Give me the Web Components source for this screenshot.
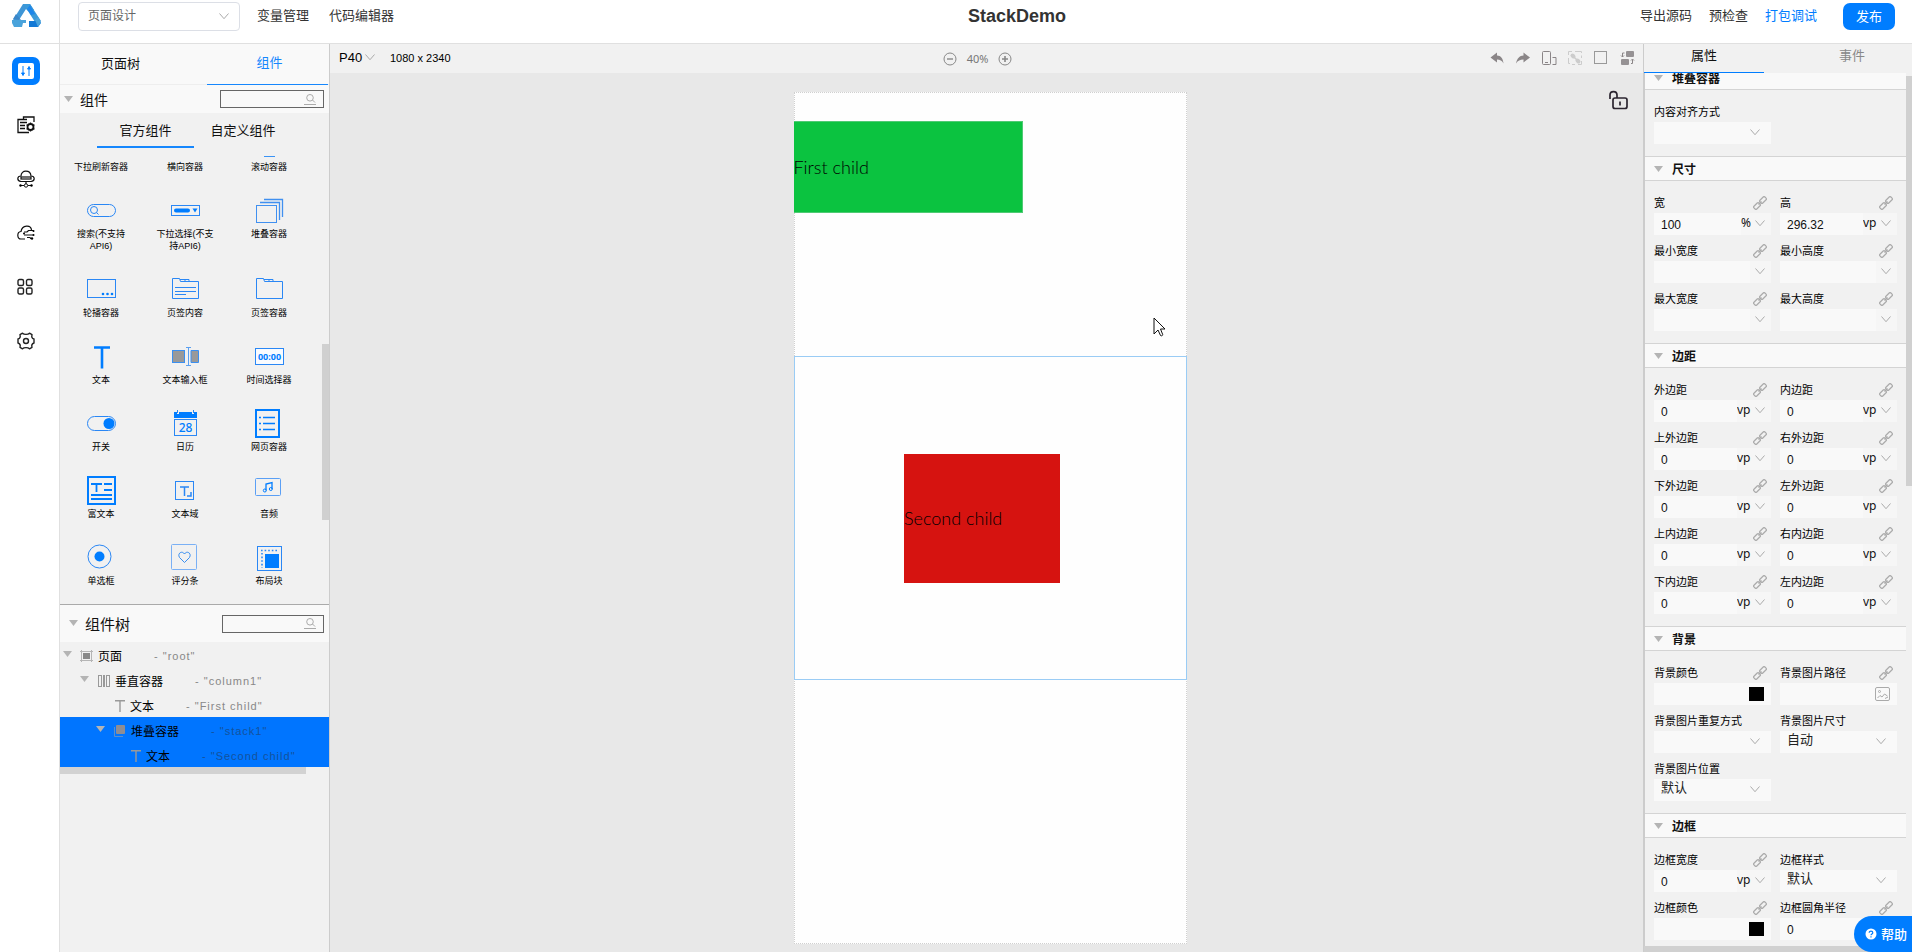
<!DOCTYPE html>
<html lang="zh-CN">
<head>
<meta charset="utf-8">
<title>StackDemo</title>
<style>
html,body{margin:0;height:100%}
body{font-family:"Liberation Sans","Noto Sans CJK SC",sans-serif;font-size:13px;color:#111;background:#fff;overflow:hidden}
</style>
</head>
<body>
<ide-app></ide-app>
<script>
const define=(name,render)=>customElements.define(name,class extends HTMLElement{
  connectedCallback(){
    if(this.shadowRoot)return;
    const t=document.createElement('template');
    t.innerHTML='<style>*{box-sizing:border-box}button,input,select{font:inherit;color:inherit;border:0;margin:0;padding:0;background:none;outline:0;border-radius:0}select{appearance:none;-webkit-appearance:none}a{color:inherit;text-decoration:none}</style>'+render(this);
    this.attachShadow({mode:'open'}).append(t.content.cloneNode(true));
  }
});

/* name: [width, height, drawing] */
const ICONS={
logo:[30,24,'<path d="M11 0h7l4 6-6 1-2-2-7 11H1z" fill="#3f96d6"/><path d="M0 16h14v3h-3l-1 4H2l-2-4z" fill="#4aa3db"/><path d="M1 15l3-5 5 6z" fill="#3a86c8"/><path d="M11 0h7l11 17-6 1L14 4z" fill="#3b9ad9"/><path d="M15 5l3-4 5 9-4 1z" fill="#1d86ea"/><path d="M17 17h11l1 2-3 4h-9z" fill="#1379d6"/><path d="M23 16l3-3 3 5-3 5z" fill="#4aa3db"/>'],
tile:[16,16,'<rect width="16" height="16" rx="2" fill="#fff"/><g stroke="#007dff" fill="none"><path d="M5 3v10M11 3v10"/><path d="M3.500 10L5 12l1.500-2zM9.500 6L11 4l1.500 2z" fill="#007dff"/></g>'],
page:[18,18,'<g fill="none" stroke="#111" stroke-width="1.300"><path d="M12 16.500H1V3.500h9M6.500 3V1h10.500v5M3 6.500h7M3 9.500h5M3 12.500h5"/><circle cx="13.500" cy="11" r="3" stroke-width="1.800"/><path d="M13.500 6.500v2M13.500 13.500v2M9.500 8.800l1.700 1M15.800 12.200l1.700 1M9.500 13.200l1.700-1M15.800 9.800l1.700-1"/></g>'],
cloud1:[18,18,'<g fill="none" stroke="#111" stroke-width="1.200"><path d="M4 11.500C-.5 11 0 6 4 6c0-6.500 9.500-6.500 10 0 4 0 4.500 5 0 5.500z"/><rect x="4" y="7" width="10" height="2"/><path d="M9 12v2.500M4 15.500h3.500M10.500 15.500H14"/></g><circle cx="9" cy="15.500" r="1.700" fill="#fff" stroke="#111"/><circle cx="3.500" cy="15.500" r="1.200"/><circle cx="14.500" cy="15.500" r="1.200"/>'],
cloud2:[18,18,'<g fill="none" stroke="#111" stroke-width="1.200"><path d="M8 15H4C0 15-.5 8 4 7.500 5 .5 14 .5 14.500 6"/><path d="M7 8h3l1.500-1.500H16M7 11h9M10 13.500h3l1 1.500"/></g><circle cx="16.500" cy="7" r="1"/><circle cx="16.500" cy="11" r="1"/><circle cx="15" cy="14.500" r="1.200"/><circle cx="7" cy="9.500" r="1"/>'],
apps:[18,18,'<g fill="none" stroke="#222" stroke-width="1.400"><rect x="1" y="1.500" width="5.500" height="6" rx="1.500"/><rect x="9.500" y="1.500" width="5.500" height="6" rx="1.500"/><rect x="1" y="10" width="5.500" height="6" rx="1.500"/><rect x="9.500" y="10" width="5.500" height="6" rx="1.500"/></g>'],
gear:[18,18,'<g fill="none" stroke="#222" stroke-width="1.400" stroke-linejoin="round"><path d="M5.500 1.200C7 2.800 11 2.800 12.500 1.200L15 2.700C14.300 5 15.500 6.500 17 7v4c-1.500.5-2.700 2-2 4.300l-2.500 1.500c-1.500-1.600-5.500-1.600-7 0L3 15.300C3.700 13 2.500 11.500 1 11V7c1.500-.5 2.700-2 2-4.300z"/><circle cx="9" cy="9" r="2.500"/></g>'],
chev:[10,7,'<path d="M.5.5L5 5.700 9.500.5" fill="none" stroke="#aaa"/>'],
tri:[9,6,'<path d="M0 0h9L4.500 6z" fill="#b4b4b4"/>'],
search:[12,11,'<g fill="none" stroke="#aaa"><circle cx="6" cy="3.800" r="3.300"/><path d="M8.500 6L11 8.500M0 10.500h12"/></g>'],
link:[14,14,'<g fill="none" stroke="#aaa" stroke-width="1.200"><rect x="-3.500" y="-2" width="7" height="4" rx="1.200" transform="translate(4 10) rotate(-45)"/><rect x="-3.500" y="-2" width="7" height="4" rx="1.200" transform="translate(10 4) rotate(-45)"/><path d="M5.500 8.500l3-3"/></g>'],
image:[15,14,'<g fill="none" stroke="#aaa"><rect x=".5" y=".5" width="14" height="13" rx="1.500"/><circle cx="4.500" cy="4.500" r="1"/><path d="M2.500 11l2.500-2.500 2 1.500 2.500-3 3 2M10 11.500l3-1.500"/></g>'],
minus:[14,14,'<circle cx="7" cy="7" r="6" fill="none" stroke="#888"/><path d="M4 7h6" stroke="#888" stroke-width="1.400"/>'],
plus:[14,14,'<circle cx="7" cy="7" r="6" fill="none" stroke="#888"/><path d="M4 7h6M7 4v6" stroke="#888" stroke-width="1.600"/>'],
undo:[16,16,'<path d="M1.500 7.500L8 2.500v3c4 0 6 3 6.500 8C13 10.500 11 9.500 8 9.500v3z" fill="#8a8587"/>'],
redo:[16,16,'<path d="M15 7.500L8.500 2.500v3C4.500 5.500 2 8.500 1 13.500c2-3 4-4 7.500-4v3z" fill="#8a8587"/>'],
phone:[16,16,'<g fill="none" stroke="#8a8587"><rect x="1.500" y="1.500" width="8" height="13" rx="1"/><path d="M4 12.500h3M11.500 7.500h3.500v7h-3.500"/></g>'],
group:[16,16,'<g fill="none" stroke="#ccc"><path d="M1.500 5V1.500H5M8 1.500h6.500V3M1.500 8v5.500H3M14.500 11v3.500H11M8 14.500H5M14.500 8V5.500"/></g><g stroke="#ccc" stroke-width="4" stroke-linecap="round"><path d="M5.500 5.500l1 1M10.500 10.500l1 1"/></g><path d="M7 7l3 3" stroke="#ccc" stroke-width="1.500"/>'],
square:[16,16,'<rect x="1.500" y="1.500" width="12" height="12" fill="none" stroke="#999"/>'],
swap:[16,16,'<g fill="#969294"><rect x="7" y="1" width="8" height="6" rx="1"/><rect x="2" y="9" width="8" height="6" rx="1"/></g><path d="M5.500 3H3.500v4M2 5.500L3.500 7 5 5.500M12 13.500h1.500v-4M12 10.500L13.500 9l1.500 1.500" fill="none" stroke="#8a8587"/>'],
lock:[20,20,'<g fill="none" stroke="#2b2530" stroke-width="1.700"><rect x="5" y="8" width="14" height="10.500" rx="2"/><path d="M2 9V5c0-4.500 7-4.500 7 0v3M12 11.500v4"/></g>'],
cursor:[13,20,'<path d="M1 1v16l4-4 2.500 5.500c1 .8 2.500 0 2.200-1L7.500 12H12z" fill="#fff" stroke="#111"/>'],
help:[12,12,'<circle cx="6" cy="6" r="5.500" fill="#fff"/><path d="M4.200 4.800c0-2.400 3.600-2.200 3.600-.1C7.800 6 6 5.900 6 7.300M6 8.300v1.300" stroke="#007dff" stroke-width="1.200" fill="none"/>'],
tRoot:[13,12,'<path d="M1.500 0v12M11.500 0v12M0 1.500h13M0 10.500h13" stroke="#b5b5b5" fill="none"/><rect x="3" y="3" width="7" height="6" fill="#888"/>'],
tCol:[13,12,'<g fill="none" stroke="#999"><rect x="1.500" y=".5" width="3" height="11"/><rect x="9.500" y=".5" width="3" height="11"/></g><rect x="6" y="0" width="2" height="12" fill="#999"/>'],
tText:[10,12,'<path d="M0 .7h10M5 0v12" stroke="#999" stroke-width="1.400"/>'],
tStack:[13,12,'<path d="M1.500 2v9.500H10" fill="none" stroke="#5d8fca"/><rect x="3" y="0" width="9" height="9" rx="1" fill="#8f8d92"/>'],
none:[30,30,''],
pScroll:[30,30,'<path d="M10 28.500h11" stroke="#3a93f5"/>'],
pSearch:[30,30,'<g fill="none" stroke="#2a87f5"><rect x="1.500" y="9.500" width="28" height="12" rx="6"/><circle cx="8" cy="15" r="3.500"/><path d="M10.500 17.500l2 2"/></g>'],
pSelect:[30,30,'<rect x="1.500" y="10.500" width="28" height="10" fill="none" stroke="#2a87f5"/><path d="M6 15.500h12" stroke="#007dff" stroke-width="4" stroke-linecap="round"/><path d="M22.500 13.500h5l-2.500 4z" fill="#007dff"/>'],
pStack:[30,30,'<g fill="none" stroke="#4090f0"><rect x="2.500" y="10.500" width="20" height="17"/><path d="M6 7.500h19.500V25M10 4.500h18.500V22" stroke-width="1.300"/></g>'],
pSwiper:[30,30,'<rect x="1.500" y="5.500" width="28" height="18" fill="none" stroke="#2a87f5"/><g fill="#007dff"><circle cx="17" cy="20" r="1.300"/><circle cx="21.500" cy="20" r="1.300"/><circle cx="26" cy="20" r="1.300"/></g>'],
pTabC:[30,30,'<g fill="none" stroke="#2a87f5"><path d="M2.500 24.500V4.500h7l1 3h18v17zM10 5.500h9v2M15 5.500v2"/><path d="M5 13.500h21M5 17.500h21M5 20.500h11"/></g>'],
pTabs:[30,30,'<path d="M2.500 24.500V4.500h7l1 3h18v17zM10 5.500h9v2M15 5.500v2" fill="none" stroke="#2a87f5"/>'],
pText:[30,30,'<path d="M8 6.500h16M16 5.500v22" stroke="#007dff" stroke-width="2.600"/>'],
pInput:[30,30,'<g fill="#999" stroke="#3a8ff0"><rect x="2.500" y="9.500" width="12" height="12"/><path d="M21 9.500h7.500v12H21z"/></g><path d="M16 6.500h5M16 24.500h5M18.500 6.500v18" stroke="#5a9ff0" fill="none"/>'],
pTime:[30,30,'<rect x="1.500" y="7.500" width="28" height="16" fill="#f9fbff" stroke="#2a87f5"/><text x="15.500" y="19" text-anchor="middle" font-family="Noto Sans,sans-serif" font-weight="700" font-size="9" fill="#007dff">00:00</text>'],
pSwitch:[30,30,'<rect x="1.500" y="8.500" width="28" height="14" rx="7" fill="none" stroke="#2a87f5"/><circle cx="23" cy="15.500" r="5.500" fill="#007dff"/>'],
pCal:[30,30,'<path d="M4 4h3v2h2V4h13v2h2V4h3v6H4z" fill="#007dff"/><path d="M7.500 2v3M23.500 2v3" stroke="#2a87f5"/><rect x="4.500" y="11.500" width="22" height="16" fill="none" stroke="#2a87f5"/><text x="15.500" y="24" text-anchor="middle" font-family="Noto Sans,sans-serif" font-weight="500" font-size="12" fill="#007dff">28</text>'],
pWeb:[30,30,'<rect x="2" y="2" width="23" height="27" fill="none" stroke="#007dff" stroke-width="2"/><path d="M9 9.500h12M9 15.500h12M9 21.500h12M5 9.500h2M5 15.500h2M5 21.500h2" stroke="#007dff" stroke-width="1.600"/>'],
pRich:[30,30,'<rect x="2" y="2" width="27" height="27" fill="none" stroke="#007dff" stroke-width="2"/><path d="M5 9h11M10.500 9v8M18 9h8M18 15h8M5 20h21M5 24h21" stroke="#007dff" stroke-width="1.800"/>'],
pArea:[30,30,'<rect x="5.500" y="6.500" width="18" height="18" fill="none" stroke="#2a87f5"/><path d="M10 12h9M14.500 12v9M17 21h4v-4" fill="none" stroke="#2a87f5" stroke-width="1.500"/>'],
pAudio:[30,30,'<rect x="1.500" y="3.500" width="25" height="17" rx="1" fill="none" stroke="#5a9ff5"/><path d="M12 15.500V9l6-1.500v6.500" fill="none" stroke="#007dff" stroke-width="1.300"/><circle cx="10.800" cy="15.500" r="1.500" fill="none" stroke="#007dff"/><circle cx="16.800" cy="14" r="1.500" fill="none" stroke="#007dff"/>'],
pRadio:[30,30,'<circle cx="13.500" cy="14.500" r="11.500" fill="none" stroke="#2a87f5"/><circle cx="13.500" cy="14.500" r="5" fill="#007dff"/>'],
pRate:[30,30,'<rect x="1.500" y="2.500" width="25" height="25" rx="1" fill="none" stroke="#7ab0f5"/><path d="M14.500 20.500l-5-5c-2.500-4 2.500-7.500 5-3.500 2.500-4 7.500-.5 5 3.500z" fill="none" stroke="#3a8ff0"/>'],
pBlock:[30,30,'<rect x="3.500" y="4.500" width="24" height="24" fill="none" stroke="#2a87f5"/><rect x="11" y="12" width="14" height="14" fill="#007dff"/><path d="M7 8.500h16M8 11v15" stroke="#2a87f5" stroke-width="1.600" stroke-dasharray="1.600 2"/>']
};
define('ui-icon',e=>{const [w,h,d]=ICONS[e.getAttribute('name')];
  return `<style>:host{display:inline-flex;flex:none;width:${w}px;height:${h}px;pointer-events:none}svg{display:block}</style><svg width="${w}" height="${h}" viewBox="0 0 ${w} ${h}" aria-hidden="true">${d}</svg>`});

define('ide-app',()=>`<style>
:host{display:grid;height:100vh;grid-template:44px minmax(0,1fr) / 60px 270px minmax(0,1fr) 269px}
ide-rail{grid-row:1/3}ide-header{grid-column:2/5}
.left{display:flex;flex-direction:column;min-height:0;border-right:1px solid #ccc;background:#f1f1f1}
component-palette{flex:1;min-height:0}component-tree{min-height:347px}
help-button{position:fixed;right:0;bottom:0}
</style>
<ide-rail></ide-rail><ide-header></ide-header>
<aside class="left"><component-palette></component-palette><component-tree></component-tree></aside>
<design-canvas></design-canvas><prop-panel></prop-panel><help-button></help-button>`);

define('ide-rail',()=>`<style>
:host{display:flex;flex-direction:column;border-right:1px solid #e0e0e0}
.logo{height:44px;border-bottom:1px solid #e0e0e0;padding:4px 0 0 12px;flex:none}
nav{display:flex;flex-direction:column;gap:26px;padding:13px 0 0 12px}
button{width:28px;height:28px;border-radius:7px;display:flex;align-items:center;justify-content:center;cursor:pointer}
.on{background:#007dff}
</style><div class="logo"><ui-icon name="logo"></ui-icon></div>
<nav><button class="on" aria-label="设计"><ui-icon name="tile"></ui-icon></button>
${['page','cloud1','cloud2','apps','gear'].map(n=>`<button aria-label="${n}"><ui-icon name="${n}"></ui-icon></button>`).join('')}</nav>`);

define('ide-header',()=>`<style>
:host{display:flex;align-items:center;justify-content:space-between;padding:0 17px 11px 18px;border-bottom:1px solid #e0e0e0;color:#333}
div{display:flex;align-items:center}
.l{gap:20px}.r{gap:17px}
a{padding-bottom:3px}
.sel{position:relative;width:162px;height:29px;margin-right:-3px}
.sel select{width:100%;height:100%;border:1px solid #dcdfe6;border-radius:4px;padding:0 9px;font-size:12px;color:#666}
.sel ui-icon{position:absolute;right:11px;top:11px}
h1{margin:0;font-size:18px;line-height:24px}
.blue{color:#007dff}
button{width:52px;height:27px;border-radius:7px;background:#007dff;color:#fff;margin-left:9px;padding-bottom:2px}
</style><div class="l"><div class="sel"><select aria-label="视图"><option>页面设计</option></select><ui-icon name="chev"></ui-icon></div>
<a href="#">变量管理</a><a href="#">代码编辑器</a></div><h1>StackDemo</h1>
<div class="r"><a href="#">导出源码</a><a href="#">预检查</a><a href="#" class="blue">打包调试</a><button>发布</button></div>`);

define('search-box',()=>`<style>
:host{display:block;position:relative;width:104px;height:18px}
input{width:100%;height:100%;border:1px solid #666;padding:0 24px 0 4px;font-size:11px}
ui-icon{position:absolute;right:8px;top:4px}
</style><input type="text" aria-label="搜索"><ui-icon name="search"></ui-icon>`);

const PAL=[['none','下拉刷新容器'],['none','横向容器'],['pScroll','滚动容器'],
['pSearch','搜索(不支持<br>API6)'],['pSelect','下拉选择(不支<br>持API6)'],['pStack','堆叠容器'],
['pSwiper','轮播容器'],['pTabC','页签内容'],['pTabs','页签容器'],
['pText','文本'],['pInput','文本输入框'],['pTime','时间选择器'],
['pSwitch','开关'],['pCal','日历'],['pWeb','网页容器'],
['pRich','富文本'],['pArea','文本域'],['pAudio','音频'],
['pRadio','单选框'],['pRate','评分条'],['pBlock','布局块']];
define('component-palette',()=>`<style>
:host{display:flex;flex-direction:column}
.tabs{display:grid;grid-template-columns:1fr 121px;height:41px;flex:none;background:#f9f9f9;border-bottom:1px solid #eee;padding-right:1px}
.tabs button{padding-bottom:5px;padding-right:26px;height:41px}.tabs button+button{padding-right:0;padding-left:4px;color:#1687fd;border-bottom:1px solid #1687fd}
header{display:flex;align-items:center;height:28px;flex:none;background:#f9f9f9;padding:0 5px 0 4px;font-size:14px}
header span{flex:1;padding-left:7px}
.sub{display:flex;padding-left:37px;height:35px;flex:none;align-items:end;gap:6px}
.sub button{height:32px;width:97px;padding-bottom:4px}.sub .on{border-bottom:2px solid #1687fd}
.sub button+button{width:86px;padding-bottom:6px}
.body{flex:1;min-height:0;overflow:hidden;position:relative;display:flex;flex-direction:column;justify-content:flex-end;border-bottom:1px solid #aaa}
.grid{display:grid;grid-template-columns:repeat(3,84px);row-gap:22px;padding-bottom:17px;flex:none;margin-left:-1px}
.bar{position:absolute;right:0;top:196px;width:7px;height:176px;background:#d0d0d0}
</style><div class="tabs"><button>页面树</button><button>组件</button></div>
<header><ui-icon name="tri"></ui-icon><span>组件</span><search-box></search-box></header>
<div class="sub"><button class="on">官方组件</button><button>自定义组件</button></div>
<div class="body"><div class="grid">${PAL.map(([i,t])=>`<palette-item icon="${i}">${t}</palette-item>`).join('')}</div><div class="bar"></div></div>`);
define('palette-item',e=>`<style>
:host{display:flex;flex-direction:column;align-items:center;gap:3px;font-size:9px;line-height:12px;text-align:center;color:#000}
</style><ui-icon name="${e.getAttribute('icon')}"></ui-icon><span><slot></slot></span>`);

define('component-tree',()=>`<style>
:host{display:block}
header{display:flex;align-items:center;height:37px;background:#f9f9f9;padding:0 5px 1px 9px;font-size:15px}
header span{flex:1;padding-left:7px}search-box{width:102px}
.bar{width:246px;height:7px;background:#d2d2d2}
</style><header><ui-icon name="tri"></ui-icon><span>组件树</span><search-box></search-box></header>
<tree-row depth="0" icon="tRoot" open note="root">页面</tree-row>
<tree-row depth="1" icon="tCol" open note="column1">垂直容器</tree-row>
<tree-row depth="2" icon="tText" note="First child">文本</tree-row>
<tree-row depth="3" icon="tStack" open note="stack1" selected>堆叠容器</tree-row>
<tree-row depth="4" icon="tText" note="Second child" selected>文本</tree-row><div class="bar"></div>`);
const INDENT=[3,20,55,36,71];
define('tree-row',e=>`<style>
:host{display:flex;align-items:center;height:25px;padding:2px 0 0 ${INDENT[e.getAttribute('depth')]}px;font-size:12px;color:#000;white-space:nowrap}
:host([selected]){background:#0075ff}:host([selected]) small{color:#14529c}
ui-icon[name=tri]{margin-right:8px;margin-bottom:4px}ui-icon.i{margin-right:5px}
small{font-size:11px;letter-spacing:1px;color:#888;margin-left:32px}
</style>${e.hasAttribute('open')?'<ui-icon name="tri"></ui-icon>':''}<ui-icon class="i" name="${e.getAttribute('icon')}"></ui-icon><slot></slot><small>- "${e.getAttribute('note')}"</small>`);

define('design-canvas',()=>`<style>
:host{display:flex;flex-direction:column;background:#e8e8e8;position:relative;min-width:0}
.bar{display:grid;grid-template-columns:1fr auto 1fr;align-items:center;height:29px;flex:none;background:#f1f1f1;padding:0 8px 1px 9px}
.bar div{display:flex;align-items:center}
.dev{gap:15px;font-size:11px;color:#000;padding-bottom:1px}
label{display:flex;align-items:center;font-size:13px}label select{width:26px}
.zoom{font-size:11px;color:#777;gap:10px;padding-right:19px;padding-top:1px;font-family:"Noto Sans",sans-serif}
.tools{justify-content:flex-end;gap:10px}button{display:flex}
.stage{flex:1;display:flex;justify-content:center;align-items:flex-start;padding:19px 0 0 7px}
.phone{width:393px;height:852px;background:#fefefe;border:1px dotted #d0d0d0;font-family:Lato,sans-serif;font-size:18px;font-weight:300;color:#000}
.green{display:flex;align-items:center;width:229px;height:92px;background:#0bc340;margin:28px 0 143px -1px;border:1px solid #4fca74;border-width:1px 1px 1px 0}
.frame{display:flex;align-items:center;justify-content:center;height:324px;margin:0 -1px;border:1px solid #9accf5;padding-right:16px}
.red{display:flex;align-items:center;width:156px;height:129px;background:#d61310}
.lock{position:absolute;right:15px;top:46px}.cur{position:absolute;left:calc(50% + 166px);top:273px}
</style><div class="bar"><div class="dev"><label><select aria-label="设备"><option>P40</option></select><ui-icon name="chev"></ui-icon></label><span>1080 x 2340</span></div>
<div class="zoom"><button aria-label="缩小"><ui-icon name="minus"></ui-icon></button><span>40%</span><button aria-label="放大"><ui-icon name="plus"></ui-icon></button></div>
<div class="tools">${['undo','redo','phone','group','square','swap'].map(n=>`<button aria-label="${n}"><ui-icon name="${n}"></ui-icon></button>`).join('')}</div></div>
<div class="stage"><div class="phone"><div class="green">First child</div><div class="frame"><div class="red">Second child</div></div></div></div>
<button class="lock" aria-label="锁定"><ui-icon name="lock"></ui-icon></button><ui-icon class="cur" name="cursor"></ui-icon>`);

const f=(label,type,value='',unit='',link=true)=>`<prop-field label="${label}" type="${type}" value="${value}" unit="${unit}"${link?' link':''}></prop-field>`;
define('prop-panel',()=>`<style>
:host{display:flex;flex-direction:column;min-height:0;background:#f1f1f1;border-left:1px solid #ccc}
.tabs{display:flex;justify-content:space-between;height:29px;flex:none}
.tabs button{width:120px;padding-bottom:8px;color:#888}.tabs .on{color:#111;border-bottom:1px solid #007dff}
.wrap{flex:1;min-height:0;display:grid;grid-template-columns:minmax(0,1fr) 6px}
.scroll{overflow:hidden;min-height:0;border-left:1px solid #ccc}.in{margin-top:-8px}
.v{height:47%;margin-top:3px;background:#d0d0d0}.h{height:6px;flex:none;background:#d0d0d0}
</style><div class="tabs"><button class="on">属性</button><button>事件</button></div>
<div class="wrap"><div class="scroll"><div class="in">
<prop-section heading="堆叠容器">${f('内容对齐方式','select','','',false)}</prop-section>
<prop-section heading="尺寸">${f('宽','unit','100','%')+f('高','unit','296.32','vp')+['最小宽度','最小高度','最大宽度','最大高度'].map(l=>f(l,'unit')).join('')}</prop-section>
<prop-section heading="边距">${['外边距','内边距','上外边距','右外边距','下外边距','左外边距','上内边距','右内边距','下内边距','左内边距'].map(l=>f(l,'unit','0','vp')).join('')}</prop-section>
<prop-section heading="背景">${f('背景颜色','color')+f('背景图片路径','image')+f('背景图片重复方式','select','','',false)+f('背景图片尺寸','select','自动','',false)+f('背景图片位置','select','默认','',false)}</prop-section>
<prop-section heading="边框">${f('边框宽度','unit','0','vp')+f('边框样式','select','默认','',false)+f('边框颜色','color')+f('边框圆角半径','unit','0','vp')}</prop-section>
</div></div><div class="v"></div></div><div class="h"></div>`);
define('prop-section',e=>`<style>
:host{display:block}
h2{display:flex;align-items:center;gap:9px;margin:0;height:25px;padding-left:9px;background:#f9f9f9;border:1px solid #d4d4d4;border-width:1px 0;font-size:12px;color:#111}
.g{display:grid;grid-template-columns:1fr 1fr;gap:8px 9px;padding:14px 9px 12px}
</style><h2><ui-icon name="tri"></ui-icon>${e.getAttribute('heading')}</h2><div class="g"><slot></slot></div>`);
define('prop-field',e=>{const a=n=>e.getAttribute(n)||'',t=a('type'),v=a('value');
const body={
 select:`<select id="f" class="full"><option>${v}</option></select><ui-icon class="c" name="chev"></ui-icon>`,
 unit:`<input id="f" type="text" value="${v}"><select class="unit" aria-label="${a('label')}单位"><option>${a('unit')}</option></select><ui-icon class="c u" name="chev"></ui-icon>`,
 color:`<input id="f" type="text"><button class="sw" aria-label="选择颜色"></button>`,
 image:`<input id="f" type="text"><button class="im" aria-label="选择图片"><ui-icon name="image"></ui-icon></button>`}[t];
return `<style>
:host{display:block;min-width:0}
.top{display:flex;justify-content:space-between;align-items:center;height:16px;margin-bottom:2px;padding-right:4px;font-size:11px;line-height:16px;color:#000}
.box{position:relative;display:flex;align-items:center;height:22px;background:#f9f9f9}
input{flex:1;width:10px;min-width:0;height:22px;padding:2px 0 0 7px;font-size:12px;color:#111}
.full{width:100%;height:22px;padding:0 28px 5px 7px;font-size:13px;color:#222}
.unit{height:22px;padding:0 20px 4px 0;box-sizing:content-box;height:18px;min-width:1px;font-family:"Noto Sans",sans-serif;font-size:12px;background:#f6f6f6}
.c{position:absolute;right:11px;top:7px}.u{right:6px}
.sw{width:15px;height:14px;background:#000;margin-right:7px}.im{display:flex;margin-right:7px}
</style><div class="top"><label for="f">${a('label')}</label>${e.hasAttribute('link')?'<ui-icon name="link"></ui-icon>':''}</div><div class="box">${body}</div>`});

define('help-button',()=>`<style>
:host{display:block}
button{display:flex;align-items:center;gap:4px;width:58px;height:36px;padding-left:11px;padding-bottom:1px;border-radius:18px 0 0 18px;background:#007dff;color:#fff;font-weight:500;white-space:nowrap}
</style><button><ui-icon name="help"></ui-icon>帮助</button>`);
</script>
</body>
</html>
